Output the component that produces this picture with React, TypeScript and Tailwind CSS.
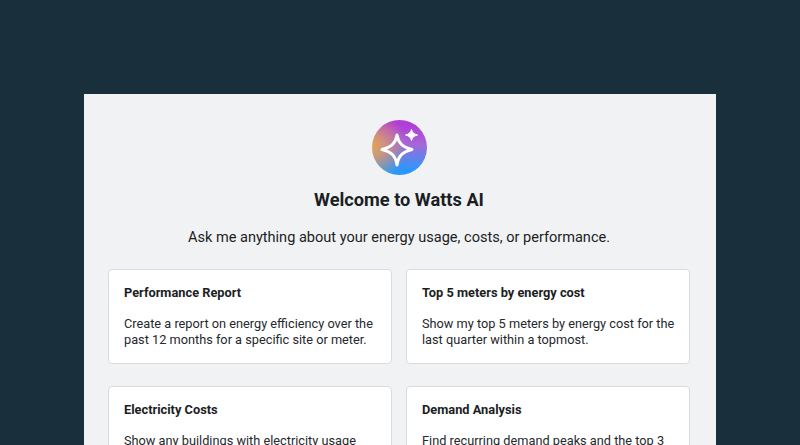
const prompts = [
  {
    title: 'Performance Report',
    body: 'Create a report on energy efficiency over the past 12 months for a specific site or meter.',
  },
  {
    title: 'Top 5 meters by energy cost',
    body: 'Show my top 5 meters by energy cost for the last quarter within a topmost.',
  },
  {
    title: 'Electricity Costs',
    body: 'Show any buildings with electricity usage above average for the last 30 days.',
  },
  {
    title: 'Demand Analysis',
    body: 'Find recurring demand peaks and the top 3 meters that contribute to them.',
  },
];

const SparkleLogo = () => (
  <div className="h-[55px] w-[55px] rounded-full overflow-hidden bg-[radial-gradient(circle_at_0%_48%,#e2a458_0%,rgba(226,164,88,0.7)_20%,rgba(226,164,88,0)_56%),linear-gradient(180deg,#b23cd6_8%,#a468d8_45%,#2a98fa_90%)]">
    <svg viewBox="0 0 55 55" className="h-full w-full" fill="none">
      <path
        d="M25 15 C26.5 23 30 27 40 29.5 C30 32 26.5 36 25 45 C23.5 36 20 32 10 29.5 C20 27 23.5 23 25 15 Z"
        stroke="white"
        strokeWidth="3"
        strokeLinejoin="round"
      />
      <path d="M39.5 9.5 C40.4 12.8 41.8 14 45.5 15 C41.8 16 40.4 17.2 39.5 20.5 C38.6 17.2 37.2 16 33.5 15 C37.2 14 38.6 12.8 39.5 9.5 Z" fill="white" stroke="white" strokeWidth="1" strokeLinejoin="round" />
    </svg>
  </div>
);

const PromptCard = ({ title, body }: { title: string; body: string }) => (
  <div className="h-[95px] rounded border border-[#d9dcdf] bg-white pl-[15px] pr-3 pt-[14px]">
    <div className="text-[12.8px] leading-[18px] font-bold text-[#1b1e23]">{title}</div>
    <p className="mt-[14px] text-[12.75px] leading-4 text-[#25282d]">{body}</p>
  </div>
);

export default function App() {
  return (
    <div className="h-[445px] w-[800px] overflow-hidden bg-[#19303c] pt-[94px] font-['Roboto',sans-serif]">
      <div className="mx-[84px] h-[500px] bg-[#f1f2f4] pl-6 pr-[26px] pt-[26px]">
        <div className="flex flex-col items-center">
          <SparkleLogo />
          <h1 className="mt-[13px] text-[18.2px] leading-6 font-bold text-[#1b1e23]">Welcome to Watts AI</h1>
          <p className="mt-3.5 text-[14.55px] leading-6 text-[#1b1e23]">
            Ask me anything about your energy usage, costs, or performance.
          </p>
        </div>
        <div className="mt-[19px] grid grid-cols-2 gap-x-[14px] gap-y-[22px]">
          {prompts.map((p) => (
            <PromptCard key={p.title} title={p.title} body={p.body} />
          ))}
        </div>
      </div>
    </div>
  );
}
